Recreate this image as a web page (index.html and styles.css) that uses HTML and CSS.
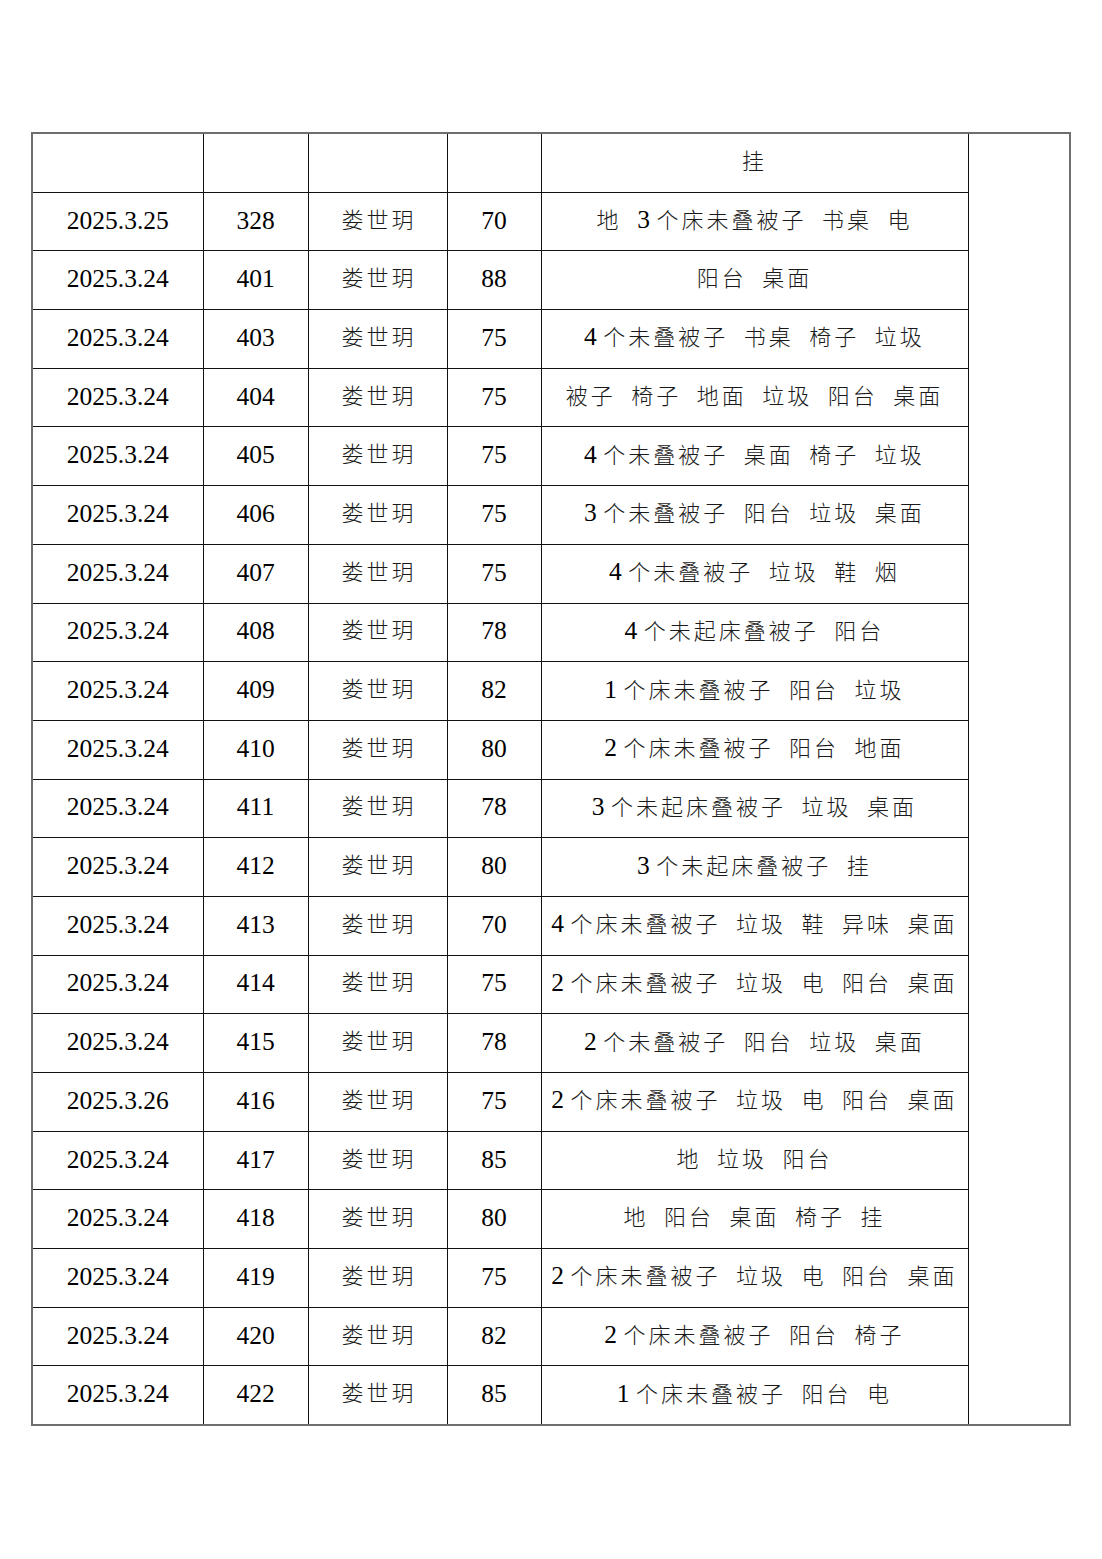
FILE: index.html
```
<!DOCTYPE html>
<html lang="zh">
<head>
<meta charset="utf-8">
<title>检查记录</title>
<link rel="stylesheet" href="styles.css">
</head>
<body>
<table class="sheet">
<colgroup>
<col class="c1"><col class="c2"><col class="c3"><col class="c4"><col class="c5"><col class="c6">
</colgroup>
<tbody>
<tr><td></td><td></td><td></td><td></td><td class="txt">挂</td><td class="side" rowspan="22"></td></tr>
<tr><td>2025.3.25</td><td>328</td><td class="name">娄世玥</td><td>70</td><td class="txt">地 <span class="n">3</span>个床未叠被子 书桌 电</td></tr>
<tr><td>2025.3.24</td><td>401</td><td class="name">娄世玥</td><td>88</td><td class="txt">阳台 桌面</td></tr>
<tr><td>2025.3.24</td><td>403</td><td class="name">娄世玥</td><td>75</td><td class="txt"><span class="n">4</span>个未叠被子 书桌 椅子 垃圾</td></tr>
<tr><td>2025.3.24</td><td>404</td><td class="name">娄世玥</td><td>75</td><td class="txt">被子 椅子 地面 垃圾 阳台 桌面</td></tr>
<tr><td>2025.3.24</td><td>405</td><td class="name">娄世玥</td><td>75</td><td class="txt"><span class="n">4</span>个未叠被子 桌面 椅子 垃圾</td></tr>
<tr><td>2025.3.24</td><td>406</td><td class="name">娄世玥</td><td>75</td><td class="txt"><span class="n">3</span>个未叠被子 阳台 垃圾 桌面</td></tr>
<tr><td>2025.3.24</td><td>407</td><td class="name">娄世玥</td><td>75</td><td class="txt"><span class="n">4</span>个未叠被子 垃圾 鞋 烟</td></tr>
<tr><td>2025.3.24</td><td>408</td><td class="name">娄世玥</td><td>78</td><td class="txt"><span class="n">4</span>个未起床叠被子 阳台</td></tr>
<tr><td>2025.3.24</td><td>409</td><td class="name">娄世玥</td><td>82</td><td class="txt"><span class="n">1</span>个床未叠被子 阳台 垃圾</td></tr>
<tr><td>2025.3.24</td><td>410</td><td class="name">娄世玥</td><td>80</td><td class="txt"><span class="n">2</span>个床未叠被子 阳台 地面</td></tr>
<tr><td>2025.3.24</td><td>411</td><td class="name">娄世玥</td><td>78</td><td class="txt"><span class="n">3</span>个未起床叠被子 垃圾 桌面</td></tr>
<tr><td>2025.3.24</td><td>412</td><td class="name">娄世玥</td><td>80</td><td class="txt"><span class="n">3</span>个未起床叠被子 挂</td></tr>
<tr><td>2025.3.24</td><td>413</td><td class="name">娄世玥</td><td>70</td><td class="txt"><span class="n">4</span>个床未叠被子 垃圾 鞋 异味 桌面</td></tr>
<tr><td>2025.3.24</td><td>414</td><td class="name">娄世玥</td><td>75</td><td class="txt"><span class="n">2</span>个床未叠被子 垃圾 电 阳台 桌面</td></tr>
<tr><td>2025.3.24</td><td>415</td><td class="name">娄世玥</td><td>78</td><td class="txt"><span class="n">2</span>个未叠被子 阳台 垃圾 桌面</td></tr>
<tr><td>2025.3.26</td><td>416</td><td class="name">娄世玥</td><td>75</td><td class="txt"><span class="n">2</span>个床未叠被子 垃圾 电 阳台 桌面</td></tr>
<tr><td>2025.3.24</td><td>417</td><td class="name">娄世玥</td><td>85</td><td class="txt">地 垃圾 阳台</td></tr>
<tr><td>2025.3.24</td><td>418</td><td class="name">娄世玥</td><td>80</td><td class="txt">地 阳台 桌面 椅子 挂</td></tr>
<tr><td>2025.3.24</td><td>419</td><td class="name">娄世玥</td><td>75</td><td class="txt"><span class="n">2</span>个床未叠被子 垃圾 电 阳台 桌面</td></tr>
<tr><td>2025.3.24</td><td>420</td><td class="name">娄世玥</td><td>82</td><td class="txt"><span class="n">2</span>个床未叠被子 阳台 椅子</td></tr>
<tr><td>2025.3.24</td><td>422</td><td class="name">娄世玥</td><td>85</td><td class="txt"><span class="n">1</span>个床未叠被子 阳台 电</td></tr>
</tbody>
</table>
</body>
</html>
```
FILE: styles.css
```
html, body {
  margin: 0;
  padding: 0;
  background: #ffffff;
}
body {
  padding-top: 132px;
  padding-left: 31px;
  font-family: "Liberation Serif", "Noto Sans CJK SC", serif;
  color: #000;
}
.sheet {
  width: 1038px;
  table-layout: fixed;
  border-collapse: collapse;
  border: 2px solid #6e6e6e;
}
.c1 { width: 171px; }
.c2 { width: 105px; }
.c3 { width: 139px; }
.c4 { width: 94px; }
.c5 { width: 427px; }
.c6 { width: 102px; }
.sheet td {
  border: 1px solid #111;
  height: 55.7px;
  padding: 0 0 2px 0;
  text-align: center;
  vertical-align: middle;
  font-size: 25.5px;
  line-height: 30px;
  white-space: nowrap;
}
.sheet td.name,
.sheet td.txt {
  font-family: "Liberation Serif", "Noto Sans CJK SC", serif;
  font-size: 22px;
  font-weight: 300;
  letter-spacing: 3px;
  word-spacing: 7px;
  color: #1a1a1a;
}
.sheet td.name {
  letter-spacing: 3px;
  text-indent: 3px;
}
.n {
  font-size: 25.5px;
  font-weight: 400;
  margin-right: 3.5px;
  color: #000;
}
.sheet td.side {
  border-top: 2px solid #6e6e6e;
  border-bottom: 2px solid #6e6e6e;
  border-right: 2px solid #6e6e6e;
}
```
